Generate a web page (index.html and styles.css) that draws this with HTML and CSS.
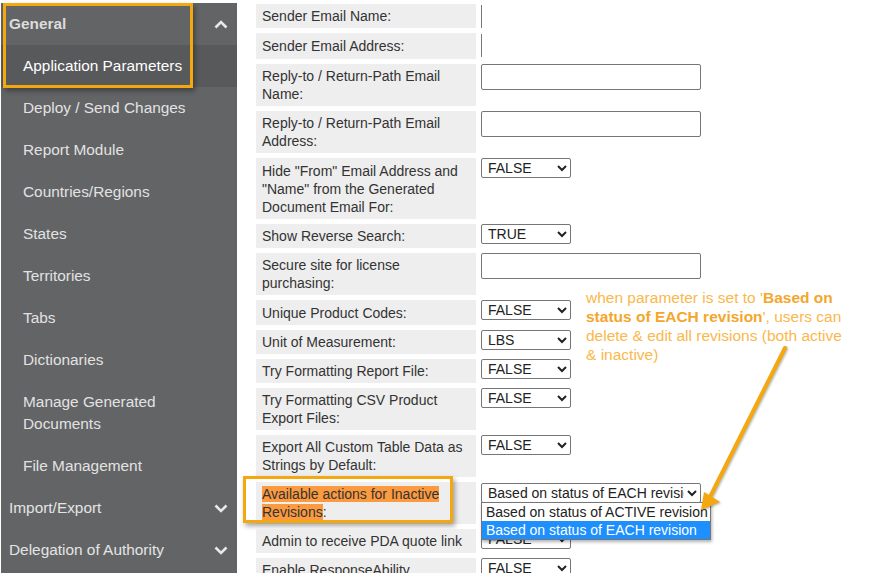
FILE: index.html
```html
<!DOCTYPE html>
<html lang="en">
<head>
  <meta charset="UTF-8">
  <title>Application Parameters</title>
  <link rel="stylesheet" href="styles.css">
</head>
<body>

  <div class="page">
    <nav class="sidebar">
      <div class="group-head bold">
        General
        <svg class="chev" width="14" height="9" viewBox="0 0 14 9"><path d="M1.5 7.5 L7 2 L12.5 7.5" /></svg>
      </div>
      <a class="item active">Application Parameters</a>
      <a class="item">Deploy / Send Changes</a>
      <a class="item">Report Module</a>
      <a class="item">Countries/Regions</a>
      <a class="item">States</a>
      <a class="item">Territories</a>
      <a class="item">Tabs</a>
      <a class="item">Dictionaries</a>
      <a class="item">Manage Generated<br>Documents</a>
      <a class="item">File Management</a>
      <div class="group-head">
        Import/Export
        <svg class="chev" width="14" height="9" viewBox="0 0 14 9"><path d="M1.5 1.5 L7 7 L12.5 1.5" /></svg>
      </div>
      <div class="group-head">
        Delegation of Authority
        <svg class="chev" width="14" height="9" viewBox="0 0 14 9"><path d="M1.5 1.5 L7 7 L12.5 1.5" /></svg>
      </div>
      <div class="callout side-callout"></div>
    </nav>

    <main class="params">
      <div class="grid">
        <div class="lbl">Sender Email Name:</div>
        <div class="val"><span class="empty"></span></div>

        <div class="lbl taller">Sender Email Address:</div>
        <div class="val"><span class="empty"></span></div>

        <div class="lbl">Reply-to / Return-Path Email Name:</div>
        <div class="val"><input type="text" class="txt"></div>

        <div class="lbl">Reply-to / Return-Path Email Address:</div>
        <div class="val"><input type="text" class="txt"></div>

        <div class="lbl tall">Hide "From" Email Address and "Name" from the Generated Document Email For:</div>
        <div class="val"><select class="sel"><option>FALSE</option></select></div>

        <div class="lbl">Show Reverse Search:</div>
        <div class="val"><select class="sel"><option>TRUE</option></select></div>

        <div class="lbl">Secure site for license purchasing:</div>
        <div class="val"><input type="text" class="txt"></div>

        <div class="lbl tall">Unique Product Codes:</div>
        <div class="val"><select class="sel"><option>FALSE</option></select></div>

        <div class="lbl">Unit of Measurement:</div>
        <div class="val"><select class="sel"><option>LBS</option></select></div>

        <div class="lbl">Try Formatting Report File:</div>
        <div class="val"><select class="sel"><option>FALSE</option></select></div>

        <div class="lbl">Try Formatting CSV Product Export Files:</div>
        <div class="val"><select class="sel"><option>FALSE</option></select></div>

        <div class="lbl">Export All Custom Table Data as Strings by Default:</div>
        <div class="val"><select class="sel"><option>FALSE</option></select></div>

        <div class="lbl marked">
          <mark class="hl">Available actions for Inactive Revisions</mark>:
          <div class="callout label-callout"></div>
        </div>
        <div class="val dd">
          <select class="sel wide"><option>Based on status of EACH revision</option></select>
          <ul class="dd-list">
            <li>Based on status of ACTIVE revision</li>
            <li class="picked">Based on status of EACH revision</li>
          </ul>
        </div>

        <div class="lbl">Admin to receive PDA quote link</div>
        <div class="val"><select class="sel"><option>FALSE</option></select></div>

        <div class="lbl">Enable ResponseAbility</div>
        <div class="val"><select class="sel"><option>FALSE</option></select></div>
      </div>
    </main>

    <p class="note">when parameter is set to '<b>Based on<br>status of EACH revision</b>', users can<br>delete &amp; edit all revisions (both active<br>&amp; inactive)</p>

    <svg class="arrow" width="877" height="573" viewBox="0 0 877 573">
      <line x1="785" y1="348" x2="709" y2="499" />
      <polygon points="701,510 704,492 720,502" />
    </svg>
  </div>

</body>
</html>
```

FILE: styles.css
```css
body {
  margin: 0;
  background: #fff;
  font-family: "Liberation Sans", Arial, sans-serif;
  overflow: hidden;
}

.page {
  position: relative;
  display: flex;
  align-items: flex-start;
  height: 570px;
  padding-top: 3px;
  overflow: hidden;
}

/* menu on the left */
.sidebar {
  position: relative;
  flex: 0 0 236px;
  height: 600px;
  margin-left: 1px;
  background: #636466;
  color: #e4e4e4;
  font-size: 15.4px;
}

.group-head {
  display: flex;
  align-items: center;
  justify-content: space-between;
  height: 42px;
  padding: 0 9px 0 8px;
  line-height: 22px;
}

.bold {
  font-weight: bold;
  color: #dcdcdc;
}

.chev path {
  fill: none;
  stroke: #e8e8e8;
  stroke-width: 2.6;
}

.item {
  display: block;
  padding: 10px 10px 10px 22px;
  line-height: 22px;
  color: #e2e2e2;
  cursor: pointer;
}

.item.active {
  background: #58595b;
  color: #fff;
}

.callout {
  position: absolute;
  border: 3px solid #f5a70f;
  box-shadow: 2px 3px 5px rgba(0, 0, 0, 0.35);
  pointer-events: none;
}

.side-callout {
  top: 0;
  left: 2px;
  width: 184px;
  height: 79px;
}

/* parameter table */
.params {
  padding: 1px 0 0 19px;
}

.grid {
  display: grid;
  grid-template-columns: 220px 230px;
  column-gap: 5px;
  row-gap: 5px;
}

.lbl {
  position: relative;
  padding: 3px 8px 3px 6px;
  background: #eeeeee;
  color: #333;
  font-size: 14px;
  line-height: 18px;
}

.lbl.tall {
  padding: 4px 8px 3px 6px;
}

.lbl.taller {
  padding: 4px 8px 4px 6px;
}

.val {
  position: relative;
}

.empty {
  display: block;
  width: 0;
  height: 23px;
  margin-top: 1px;
  border-left: 1px solid #777;
}

.txt {
  box-sizing: border-box;
  width: 220px;
  height: 26px;
  margin: 0;
  border: 1px solid #767676;
  border-radius: 2px;
}

.sel {
  box-sizing: border-box;
  width: 90px;
  height: 20px;
  margin: 0;
  padding: 0 0 0 2px;
  border: 1px solid #767676;
  border-radius: 2px;
  background: #fff;
  color: #222;
  font-family: "Liberation Sans", Arial, sans-serif;
  font-size: 14px;
}

.sel.wide {
  width: 220px;
  margin-top: 1px;
}

.hl {
  background: #fc9a3f;
  color: #333;
}

.label-callout {
  top: -6px;
  left: -13px;
  width: 204px;
  height: 41px;
}

.dd-list {
  position: absolute;
  top: 20px;
  left: 0;
  z-index: 3;
  width: 228px;
  margin: 0;
  padding: 0;
  list-style: none;
  background: #fff;
  border: 1px solid #767676;
  box-shadow: 1px 2px 3px rgba(0, 0, 0, 0.3);
  font-size: 14px;
  color: #222;
}

.dd-list li {
  height: 18px;
  padding-left: 4px;
  line-height: 18px;
  white-space: nowrap;
}

.dd-list .picked {
  background: #1e8ffe;
  color: #fff;
}

/* yellow annotation */
.note {
  position: absolute;
  top: 288px;
  left: 586px;
  margin: 0;
  color: #fab84c;
  font-size: 15.5px;
  line-height: 19px;
}

.note b {
  color: #f4a62c;
}

.arrow {
  position: absolute;
  top: 0;
  left: 0;
  z-index: 5;
  pointer-events: none;
  filter: drop-shadow(1px 1px 1px rgba(0, 0, 0, 0.3));
}

.arrow line {
  stroke: #f5a70f;
  stroke-width: 4;
  stroke-linecap: round;
}

.arrow polygon {
  fill: #f5a70f;
}
```
